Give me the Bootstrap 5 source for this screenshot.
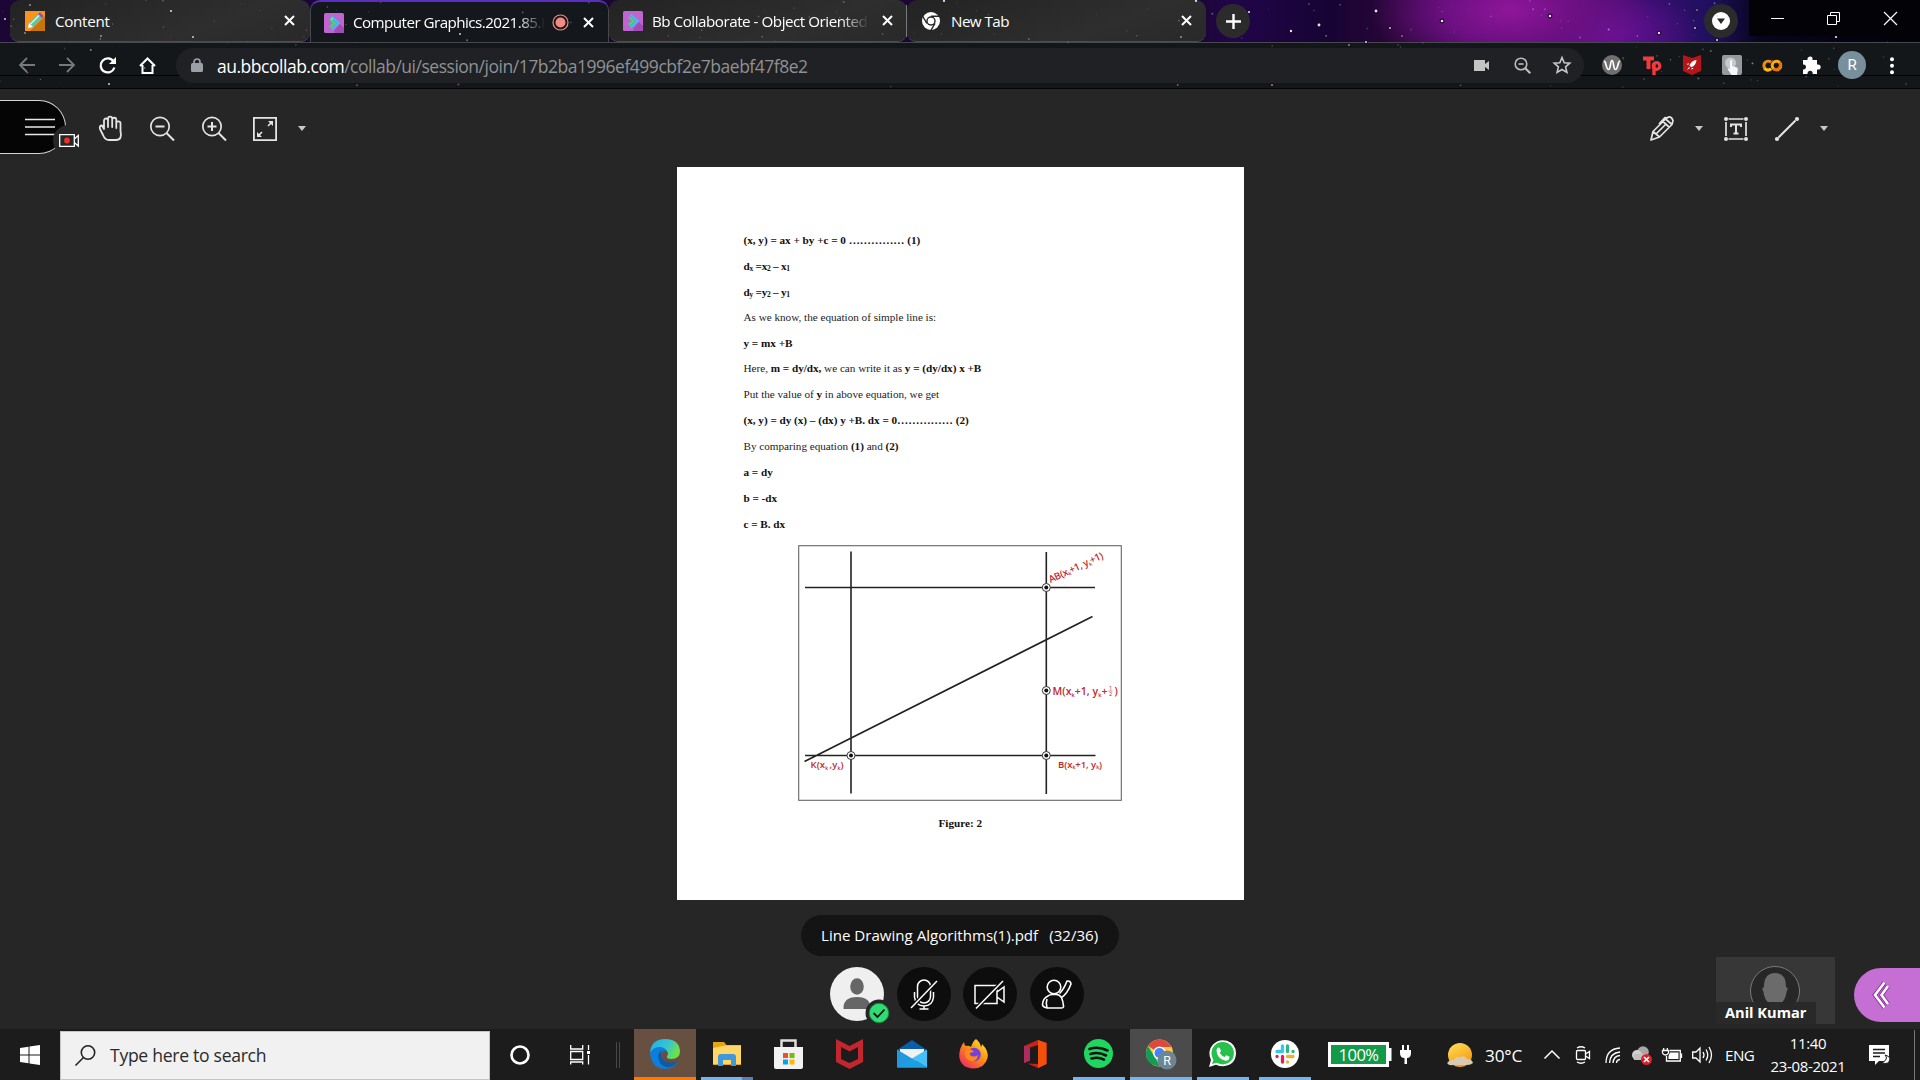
<!DOCTYPE html>
<html lang="en">
<head>
<meta charset="utf-8">
<meta name="viewport" content="width=device-width, initial-scale=1">
<title>Computer Graphics</title>
<link rel="stylesheet" href="https://cdn.jsdelivr.net/npm/bootstrap@5.3.0/dist/css/bootstrap.min.css">
<script src="https://cdn.jsdelivr.net/npm/bootstrap@5.3.0/dist/js/bootstrap.bundle.min.js"></script>
<style>
body{width:1920px;height:1080px;background:#262626;color:#fff;font-family:"Open Sans","Noto Sans",sans-serif;line-height:1.2}
svg{display:block;flex:none;overflow:visible}
.c18{width:18px}.c20{width:20px}.c30{width:30px}.c40{width:40px}.c52{width:51.3px}.c56{width:56px}.c62{width:62px}
.ln{fill:none;stroke:currentColor}
.sky{left:0;top:0;z-index:0}
/* tab strip */
.strip{height:42px;background:radial-gradient(ellipse 140px 70px at 1510px 10px,#8f1699 0,#6e1084 45%,transparent 100%),radial-gradient(ellipse 90px 50px at 1610px 34px,#6a1298 0,transparent 100%),linear-gradient(90deg,#1c0636 0,#1c0636 1200px,#21054a 1230px,#170434 1330px,#2a0638 1400px,#400c62 1560px,#350d6c 1650px,#201060 1710px,#07041c 1760px,#020208 1920px)}
.tabx{height:42px;background:linear-gradient(160deg,#232323,#2e2e2e 65%,#292929);border-radius:10px 10px 9px 9px;font-size:15.2px;letter-spacing:-.55px;border-bottom:1px solid #4c4d4f}
.tabx.on{background:#14171c;border:1px solid #45474b;border-top:2px solid #5a2fc0;border-bottom:0;border-radius:10px 10px 0 0;height:43px}
.ttl{white-space:nowrap;line-height:1.5}
.tabx .ttl{padding-top:1px}
.tabx.on .ttl{padding-top:0}
.fade-r{overflow:hidden;-webkit-mask-image:linear-gradient(90deg,#000 calc(100% - 28px),transparent)}
.disc{width:34px;height:34px;background:#2b2b2b}
.winctl{height:36px;background:#030307;width:171px;margin-bottom:6px}
/* address bar */
.addr{height:47px;background:linear-gradient(#14171a,#14171a);border-top:1px solid #47494c;border-bottom:1px solid #050505;padding-left:7px}
.seam{left:0;right:0;top:32px;height:1px;background:#020202}
.omni{height:35px;width:1408px;background:#202124;margin-left:9px;padding-right:2px;font-size:17.5px;letter-spacing:-.48px}
.omni .rest{color:#8f9194}
/* collaborate stage */
.stage{height:941px}
.tools{height:78px;color:#e4e4e4;padding-top:2px}
.burger{width:66px;height:54px;background:#050505;border:1px solid #d5d5d5;border-left:0;border-radius:0 27px 27px 0;padding-left:25px;margin-top:-3px;margin-right:19.5px}
.recdot{left:53px;top:24px;width:31px;height:31px;background:#262626}
.sheet{width:567px;height:733px;background:#fff;color:#1c1c1c;font-family:"Liberation Serif",serif;font-size:11.2px;letter-spacing:-.02px;padding:61px 66px 0 66.5px}
.sheet p{margin:0;height:25.9px;line-height:25.9px;white-space:nowrap}
.sheet p.up{margin-top:-1px}
.sheet b{color:#111}
.sheet sub{font-size:7.5px;bottom:-.15em;line-height:0}
.tight{letter-spacing:-.25px}
.cap{margin-top:16px;margin-left:-1px}
.fig{margin:7px 0 0 54px}
.fig text{font-family:"Open Sans",sans-serif;font-weight:600;fill:#c2272d;letter-spacing:0}
.docname{width:318px;height:41px;background:#141414;font-size:15.1px;margin-top:15px}
.rnd{width:54px;height:54px;background:#0d0d0d}
.me{background:#efefef}
.tick{left:35px;top:32px}
.tile{left:1716px;top:868px;width:119px;height:67px;background:#373737}
.nametag{left:0;bottom:0;width:100px;height:22px;background:rgba(40,40,40,.94);font-weight:700;font-size:14.6px;padding-left:9px}
.opener{right:0;top:879px;width:66px;height:54px;background:#c56fd5;border-radius:27px 0 0 27px;padding-left:18px}
/* taskbar */
.tbar{height:51px;background:#1c1c1c;font-size:15.6px}
.find{width:430px;height:49px;background:#f1f1f1;border:1px solid #c4c4c4;color:#2b2b2b;font-size:17.6px;letter-spacing:-.15px;margin-top:1px}
.app{width:62px;height:51px;border-bottom:3px solid transparent;padding:1px 1px 0 0}
.app.w{width:52px;margin:0 5px;border-color:#76b4ee}
.app.edge{background:#67503f;border-color:#ff7800}
.app.cur{background:#4b4b4b;border-color:#76b4ee}
.vr2{width:4px;height:26px;border-left:1px solid #484848;border-right:1px solid #484848}
.batt{width:61px;height:25px;background:#129a48;border:3px solid #fff;font-size:16.6px;letter-spacing:-.5px}
.clk{font-size:15px;line-height:23px;letter-spacing:-.35px;width:90px}
</style>
</head>
<body class="d-flex flex-column overflow-hidden">

<header class="strip d-flex position-relative">
  <div class="tabx d-flex align-items-center position-relative" style="width:300px;margin-left:10px;padding-left:15px">
    <svg width="20" height="20"><rect width="20" height="20" fill="#f7931e"/><path d="M5 20L20 5v15z" fill="#c97409"/><path d="M4 12L13 3l4 4-9 9-5 1z" fill="#54c7b5"/><path d="M5.500 13L14.500 4" stroke="#e5f7b8" stroke-width="1.500"/><path d="M13 3l2-1.500L18.500 5 17 7z" fill="#8a4bc4"/><path d="M3 17l1-5 4 4z" fill="#fff"/></svg>
    <span class="ttl" style="margin-left:10px;letter-spacing:-.3px">Content</span>
    <svg class="ms-auto me-3" width="9" height="9" stroke="#fff" stroke-width="2"><path d="M0 0l9 9M9 0L0 9"/></svg>
  </div>
  <div class="tabx on d-flex align-items-center position-relative" style="width:299px;padding-left:13px">
    <svg width="20" height="20"><rect width="20" height="20" rx="1.500" fill="#c065d0"/><path d="M10 18l6-7 4 4v5h-9z" fill="#a24cb5"/><path d="M7.500 3.500l7 6.500-7 6.500" fill="none" stroke="#2cc9ea" stroke-width="2.200"/><path d="M6 6l4.500 4L6 14" fill="none" stroke="#3be06a" stroke-width="2.200"/></svg>
    <span class="ttl fade-r" style="width:192px;margin-left:9px">Computer Graphics.2021.85.B</span>
    <svg style="margin-left:7px" width="17" height="17"><circle cx="8.500" cy="8.500" r="7.500" fill="none" stroke="#f28b82" stroke-width="1.200"/><circle cx="8.500" cy="8.500" r="5" fill="#f28b82"/></svg>
    <svg style="margin-left:15px" width="9" height="9" stroke="#fff" stroke-width="2"><path d="M0 0l9 9M9 0L0 9"/></svg>
  </div>
  <div class="tabx d-flex align-items-center position-relative" style="width:298px;padding-left:14px">
    <svg width="20" height="20"><rect width="20" height="20" rx="1.500" fill="#c065d0"/><path d="M10 18l6-7 4 4v5h-9z" fill="#a24cb5"/><path d="M7.500 3.500l7 6.500-7 6.500" fill="none" stroke="#2cc9ea" stroke-width="2.200"/><path d="M6 6l4.500 4L6 14" fill="none" stroke="#3be06a" stroke-width="2.200"/></svg>
    <span class="ttl fade-r" style="width:218px;margin-left:9px;letter-spacing:-.48px">Bb Collaborate - Object Oriented</span>
    <svg style="margin-left:14px" width="9" height="9" stroke="#fff" stroke-width="2"><path d="M0 0l9 9M9 0L0 9"/></svg>
    <svg style="margin-left:14px" width="1" height="32"><rect width="1" height="32" fill="#77797c"/></svg>
  </div>
  <div class="tabx d-flex align-items-center position-relative" style="width:299px;padding-left:14px">
    <svg width="20" height="20" viewBox="0 0 20 20"><circle cx="10" cy="10" r="9" fill="#fff"/><circle cx="10" cy="10" r="4.700" fill="#262626"/><circle cx="10" cy="10" r="3.300" fill="#fff"/><path d="M10 5.300h9M5.900 12.300L1.500 5M14 12.300L9.500 20" stroke="#262626" stroke-width="1.400"/></svg>
    <span class="ttl" style="margin-left:10px">New Tab</span>
    <svg class="ms-auto" style="margin-right:15px" width="9" height="9" stroke="#fff" stroke-width="2"><path d="M0 0l9 9M9 0L0 9"/></svg>
  </div>
  <span class="disc rounded-circle d-flex align-items-center justify-content-center align-self-center" style="margin-left:10px"><svg width="15" height="15" stroke="#fff" stroke-width="2.400"><path d="M0 7.500h15M7.500 0v15"/></svg></span>
  <span class="disc rounded-circle d-flex align-items-center justify-content-center align-self-center ms-auto"><svg width="18" height="18"><circle cx="9" cy="9" r="9" fill="#fff"/><path d="M5 6.500h8L9 12z" fill="#262626"/></svg></span>
  <div class="winctl d-flex align-items-center position-relative" style="margin-left:11px;z-index:1">
    <span class="c56 d-flex justify-content-center"><svg width="13" height="13" stroke="#fff"><path d="M0 6.500h13"/></svg></span>
    <span class="c56 d-flex justify-content-center"><svg width="13" height="13" class="ln"><path d="M.5 3.500h9v9h-9zM3.500 3V.5h9v9H10"/></svg></span>
    <span class="flex-fill d-flex justify-content-center"><svg width="13" height="13" stroke="#fff" stroke-width="1.200"><path d="M0 0l13 13M13 0L0 13"/></svg></span>
  </div>
</header>

<nav class="addr d-flex align-items-center position-relative">
  <div class="seam position-absolute"></div>
  <span class="c40 d-flex justify-content-center"><svg width="16" height="16" class="ln" style="color:#77797c" stroke-width="1.800"><path d="M16 8H1M8 1L1 8l7 7"/></svg></span>
  <span class="c40 d-flex justify-content-center"><svg width="16" height="16" class="ln" style="color:#77797c" stroke-width="1.800"><path d="M0 8h15M8 1l7 7-7 7"/></svg></span>
  <span class="c40 d-flex justify-content-center"><svg width="17" height="17" class="ln" stroke-width="2.200"><path d="M14.500 4.500a7 7 0 1 0 .9 6"/><path d="M17 0v7h-7z" fill="#fff" stroke="none"/></svg></span>
  <span class="c40 d-flex justify-content-center"><svg width="17" height="17" class="ln" stroke-width="2"><path d="M1 9l7.500-7.500L16 9M3.500 8v8h10V8"/></svg></span>
  <div class="omni rounded-pill d-flex align-items-center position-relative" style="z-index:1">
    <span class="d-flex justify-content-center" style="width:42px"><svg width="12" height="15"><rect y="5" width="12" height="9" rx="1.500" fill="#9aa0a6"/><path d="M3 6V4a3 3 0 0 1 6 0v2" fill="none" stroke="#9aa0a6" stroke-width="1.700"/></svg></span>
    <span class="ttl" style="margin-left:-1px;padding-top:1px">au.bbcollab.com<span class="rest">/collab/ui/session/join/17b2ba1996ef499cbf2e7baebf47f8e2</span></span>
    <span class="c40 d-flex justify-content-center ms-auto"><svg width="16" height="12" fill="#c4c4c4"><path d="M0 1h11v4l4-3v9l-4-3v4H0z"/></svg></span>
    <span class="c40 d-flex justify-content-center"><svg width="17" height="17" class="ln" style="color:#bdbdbd" stroke-width="1.600"><circle cx="7" cy="7" r="5.800"/><path d="M11.300 11.300l5 5" stroke-width="2.200"/><path d="M4.500 7h5"/></svg></span>
    <span class="c40 d-flex justify-content-center"><svg width="18" height="18" class="ln" style="color:#c8c8c8" stroke-width="1.600"><path d="M9 1.500l2.200 5.200 5.600.5-4.200 3.700 1.300 5.500L9 13.500l-4.900 2.900 1.300-5.500L1.200 7.200l5.600-.5z"/></svg></span>
  </div>
  <span class="c40 d-flex justify-content-center ms-2 position-relative"><svg width="20" height="20"><circle cx="10" cy="10" r="10" fill="#6f6f6f"/><path d="M2 6.500C4 5 4 14.500 6.500 14.500S8 5.500 10 5.500s1 9 3.500 9S16 5 18 6.500" class="ln" stroke-width="1.700"/></svg></span>
  <span class="c40 d-flex justify-content-center position-relative"><svg width="19" height="18" fill="none" stroke="#f03a3e" stroke-width="4"><path d="M0 2.500h11M5.500 2v11"/><path d="M11 19V7" stroke-width="3.400"/><circle cx="13.500" cy="10" r="3.300" stroke-width="3.200"/></svg></span>
  <span class="c40 d-flex justify-content-center position-relative"><svg width="18" height="20"><path d="M0 0l9 3 9-3v16l-9 4-9-4z" fill="#b61619"/><path d="M13.500 5c-4 .3-6 3-7 5.500l1.800 1.800c3-1.200 5-3.500 5.200-7.300zM5.800 9.500l-2 .3 1.500-2zM8.800 12.700l-.3 2 2-1.500zM4 15l2-3 1 1z" fill="#fff"/></svg></span>
  <span class="c40 d-flex justify-content-center position-relative"><svg width="20" height="20"><rect width="20" height="20" rx="2" fill="#969a9c"/><circle cx="8.500" cy="8" r="5.500" fill="#c7caca"/><path d="M8 5.500q1.500-1 2 0V11l5 1.500q1 .4.800 2L15 20H9.500L5.500 14q1-1.500 2.500 0z" fill="#f4f8ff"/></svg></span>
  <span class="c40 d-flex justify-content-center position-relative"><svg width="20" height="13" fill="none" stroke-width="3"><path d="M9 3.300a4.300 4.300 0 1 0 0 6.500" stroke="#ec8f0d"/><path d="M2.500 9.500a4.300 4.300 0 0 0 6.500.3" stroke="#f9bd0f"/><circle cx="14.500" cy="6.500" r="4.300" stroke="#f9ab10"/><path d="M11.500 9.700a4.300 4.300 0 0 0 6-6" stroke="#e8710a"/></svg></span>
  <span class="c40 d-flex justify-content-center position-relative"><svg width="18" height="18" fill="#fff"><path d="M0 4h4.500C3.500 0 10.500-1 9.500 4H14v4.500c5-1 5 6 0 5V18H9.700c.4-4.500-5.500-4-5.200 0H0v-4.500c4 .5 4-5.500 0-5z"/></svg></span>
  <span class="c40 d-flex justify-content-center position-relative"><svg width="28" height="28"><circle cx="14" cy="14" r="14" fill="#78909c"/><text x="14" y="19" text-anchor="middle" font-family="Roboto" font-size="15" fill="#fff">R</text></svg></span>
  <span class="c40 d-flex justify-content-center position-relative"><svg width="4" height="17" fill="#fff"><circle cx="2" cy="2.200" r="2"/><circle cx="2" cy="8.700" r="2"/><circle cx="2" cy="15.200" r="2"/></svg></span>
</nav>

<main class="stage position-relative d-flex flex-column align-items-center">
  <div class="tools d-flex align-items-center w-100">
    <div class="burger position-relative d-flex align-items-center">
      <svg width="30" height="18" stroke="#e8e8e8" stroke-width="1.600"><path d="M0 1.500h30M0 9h30M0 16.500h30"/></svg>
      <span class="recdot position-absolute rounded-circle d-flex align-items-center"><svg style="margin-left:6px;margin-top:0" width="20" height="13"><path d="M.7.700h14.600v11.600H.7zM15.300 5l4-3.500v10.500l-4-3.500" fill="none" stroke="#fff" stroke-width="1.300"/><circle cx="8" cy="6.500" r="2.900" fill="#f22f28"/></svg></span>
    </div>
    <span class="c52 d-flex justify-content-center"><svg width="24" height="25" class="ln" stroke-width="1.800" stroke-linejoin="round" stroke-linecap="round"><path d="M5 13V4.500a2 2 0 0 1 4 0V11M9 11V2.800a2 2 0 0 1 4.200 0V11M13.200 11V3.800a2 2 0 0 1 4.100 0V12M17.300 12V7.500a2 2 0 0 1 4.200 0V15Q23.500 24 17 24H10Q6 24 4 19L1 13Q0 9.500 3 9.500L5 13"/></svg></span>
    <span class="c52 d-flex justify-content-center"><svg width="24" height="25" class="ln" stroke-width="1.700"><circle cx="10" cy="10.500" r="9.200"/><path d="M16.500 17l7.500 7.500M5.500 10.500h9" stroke-width="2"/></svg></span>
    <span class="c52 d-flex justify-content-center"><svg width="24" height="25" class="ln" stroke-width="1.700"><circle cx="10" cy="10.500" r="9.200"/><path d="M16.500 17l7.500 7.500M5.500 10.500h9M10 6v9" stroke-width="2"/></svg></span>
    <span class="c52 d-flex justify-content-center"><svg width="24" height="24" class="ln" stroke-width="1.800"><path d="M.9.900h22.200v22.200H.9z"/><path d="M15 9l4.500-4.500M9 15l-4.500 4.500" stroke-width="1.600"/><path d="M15 4h5v5zM4 15v5h5z" fill="currentColor" stroke="none"/></svg></span>
    <svg width="8" height="5" fill="#c8c8c8" style="margin-left:7px"><path d="M0 0h8L4 5z"/></svg>
    <span class="ms-auto"><svg width="24" height="25" class="ln" stroke-width="1.700" stroke-linejoin="round"><path d="M1 24l2-8.500L15.500 3l6.500 5.500L9.500 21zM3 15.500L9.500 21M15.500 3l3-2q3-.5 4.500 3.500L22 8.500M13 5.500l6 5.500M9 8l6-6.500 3 .5M6.500 17.500L16.500 7.500"/></svg></span>
    <svg width="8" height="5" fill="#c8c8c8" style="margin-left:21px"><path d="M0 0h8L4 5z"/></svg>
    <svg width="24" height="24" style="margin-left:21px" fill="currentColor"><path d="M4.500 2h15M4.500 22h15M2 5v14M22 5v14" class="ln" stroke-width="1.700"/><circle cx="2" cy="2" r="2"/><circle cx="22" cy="2" r="2"/><circle cx="2" cy="22" r="2"/><circle cx="22" cy="22" r="2"/><path d="M7 10V7.500h10V10M12 7.500v9M9.500 16.500h5" class="ln" stroke-width="2"/></svg>
    <svg width="24" height="24" style="margin-left:27px" fill="currentColor"><path d="M3.500 20.500L20.500 3.500" class="ln" stroke-width="2"/><circle cx="2" cy="22" r="2.100"/><circle cx="22" cy="2" r="2.100"/></svg>
    <svg width="8" height="5" fill="#c8c8c8" style="margin-left:21px;margin-right:92px"><path d="M0 0h8L4 5z"/></svg>
  </div>

  <article class="sheet" style="margin-left:1px">
    <p><b>(x, y) = ax + by +c = 0 …………… (1)</b></p>
    <p class="tight"><b>d<sub>x</sub> =x<sub>2</sub> – x<sub>1</sub></b></p>
    <p class="tight"><b>d<sub>y</sub> =y<sub>2</sub> – y<sub>1</sub></b></p>
    <p class="up">As we know, the equation of simple line is:</p>
    <p><b>y = mx +B</b></p>
    <p>Here, <b>m = dy/dx,</b> we can write it as <b>y = (dy/dx) x +B</b></p>
    <p>Put the value of <b>y</b> in above equation, we get</p>
    <p><b>(x, y) = dy (x) – (dx) y +B. dx = 0…………… (2)</b></p>
    <p>By comparing equation <b>(1)</b> and <b>(2)</b></p>
    <p><b>a = dy</b></p>
    <p><b>b = -dx</b></p>
    <p><b>c = B. dx</b></p>
    <svg class="fig" width="324" height="256" viewBox="0 0 324 256">
      <rect x=".7" y=".7" width="322.600" height="254.600" fill="#fff" stroke="#666" stroke-width="1.100"/>
      <g stroke="#222" stroke-width="1.600"><path d="M53 6.500v242M248.300 7v242M7 42.500h290M7 210.500h290.500M6.500 216.500L294.500 71.500"/></g>
      <g fill="#fff" stroke="#333" stroke-width="1"><circle cx="53" cy="210.500" r="4"/><circle cx="248.300" cy="210.500" r="4"/><circle cx="248.300" cy="145.500" r="4"/><circle cx="248.300" cy="42.500" r="4"/></g>
      <g fill="#111"><circle cx="53" cy="210.500" r="2"/><circle cx="248.300" cy="210.500" r="2"/><circle cx="248.300" cy="145.500" r="2"/><circle cx="248.300" cy="42.500" r="2"/></g>
      <text x="12.500" y="223" font-size="9.500" textLength="33">K(x<tspan font-size="5" dy="1.500">k </tspan><tspan dy="-1.500">,y</tspan><tspan font-size="5" dy="1.500">k</tspan><tspan dy="-1.500">)</tspan></text>
      <text x="260" y="222.500" font-size="9.500" textLength="44">B(x<tspan font-size="5" dy="1.500">k</tspan><tspan dy="-1.500">+1, y</tspan><tspan font-size="5" dy="1.500">k</tspan><tspan dy="-1.500">)</tspan></text>
      <text x="254.500" y="150" font-size="10.500" textLength="55">M(x<tspan font-size="5.500" dy="1.500">k</tspan><tspan dy="-1.500">+1, y</tspan><tspan font-size="5.500" dy="1.500">k</tspan><tspan dy="-1.500">+</tspan></text>
      <text x="311" y="145" font-size="5.500" style="font-weight:400">1</text><path d="M310.500 146h4" stroke="#c2272d" stroke-width=".6"/><text x="311" y="151" font-size="5.500" style="font-weight:400">2</text><text x="316.500" y="150" font-size="10.500">)</text>
      <text transform="translate(252.500 38) rotate(-25)" font-size="9.800" textLength="59">AB(x<tspan font-size="5" dy="1.500">k</tspan><tspan dy="-1.500">+1, y</tspan><tspan font-size="5" dy="1.500">k</tspan><tspan dy="-1.500">+1)</tspan></text>
    </svg>
    <div class="cap text-center"><b>Figure: 2</b></div>
  </article>

  <div class="docname rounded-pill d-flex align-items-center" style="padding-left:20px"><span class="ttl">Line Drawing Algorithms(1).pdf</span><span class="ttl" style="margin-left:11px">(32/36)</span></div>

  <div class="d-flex" style="gap:12.500px;margin-top:11px;margin-right:6px">
    <span class="rnd me rounded-circle position-relative">
      <svg width="54" height="54" fill="#666"><ellipse cx="27" cy="19.500" rx="6.800" ry="8.300"/><path d="M13.500 42q-.5-12 13.500-12t13.500 12z"/></svg>
      <svg class="tick position-absolute" width="28" height="28"><circle cx="14" cy="14" r="13.500" fill="#262626"/><circle cx="14" cy="14" r="9.700" fill="#2fdd74" stroke="#0f8f41"/><path d="M8.500 14l4 4 7-7.500" fill="none" stroke="#111" stroke-width="1.800"/></svg>
    </span>
    <span class="rnd rounded-circle"><svg width="54" height="54" class="ln" stroke-width="1.500"><rect x="20.500" y="13" width="13" height="23" rx="6.500"/><path d="M17.500 25v5q1 9 9.500 9t9.500-9v-5M27 39v2.500M22.500 42h9"/><path d="M14 41L40 14" stroke="#0d0d0d" stroke-width="4"/><path d="M14 41L40 14"/></svg></span>
    <span class="rnd rounded-circle"><svg width="54" height="54" class="ln" stroke-width="1.500"><path d="M12 18.500h22v18H12zM34 25l7-5v15l-7-5"/><path d="M13 41.500L40 14" stroke="#0d0d0d" stroke-width="4"/><path d="M13 41.500L40 14"/></svg></span>
    <span class="rnd rounded-circle"><svg width="54" height="54" class="ln" stroke-width="1.600" stroke-linejoin="round"><circle cx="24" cy="20" r="6.800"/><path d="M18 29q-5 2-5.500 8.500Q12.500 40 17 41h14q3 0 2.500-2-.5-5-2-8.500-2-3-5-3h-4q-3 0-4.500 1.500zM17 41q-1.500-5 0-9M31.500 30.500q6-4 9.500-13.500-.5-3.500-4-3-3 8-7.500 12.500"/></svg></span>
  </div>

  <div class="tile position-absolute overflow-hidden">
    <svg width="119" height="67"><circle cx="59" cy="34" r="24.500" fill="#272727" stroke="#7b7b7b"/><path d="M48 30q0-14 11-14t11 14q3 1 .5 5-.5 7-6 12-5.500 3-11 0-5.500-5-6-12-2.500-4 .5-5z" fill="#6b6b6b"/><path d="M54 45h10v9H54z" fill="#6b6b6b"/></svg>
    <span class="nametag position-absolute d-flex align-items-center">Anil Kumar</span>
  </div>
  <span class="opener position-absolute d-flex align-items-center"><svg width="18" height="28" fill="none"><path d="M12.500 1.500L3 14l9.500 12.500M16 5L9.500 14l6.500 9" stroke="#8f34a3" stroke-width="4.500"/><path d="M12.500 1.500L3 14l9.500 12.500M16 5L9.500 14l6.500 9" stroke="#fff" stroke-width="2.500"/></svg></span>
</main>

<footer class="tbar d-flex align-items-center">
  <span class="d-flex justify-content-center" style="width:60px"><svg width="20" height="20" fill="#fff"><path d="M0 3l8.500-1.200v7.700H0zM9.500 1.600L20 0v9.500H9.500zM0 10.500h8.500v7.700L0 17zM9.500 10.500H20V20L9.500 18.400z"/></svg></span>
  <div class="find d-flex align-items-center"><svg width="21" height="21" fill="none" stroke="#222" stroke-width="1.600" style="margin-left:14px"><circle cx="13" cy="7.500" r="6.700"/><path d="M8.500 12.500L.5 20.500"/></svg><span class="ttl" style="margin-left:14px;letter-spacing:-.3px">Type here to search</span></div>
  <span class="c62 d-flex justify-content-center" style="padding-right:2px"><svg width="20" height="20"><circle cx="10" cy="10" r="8.500" fill="none" stroke="#fff" stroke-width="2.600"/></svg></span>
  <span class="d-flex justify-content-center" style="width:58px;padding-right:2px"><svg width="20" height="20" class="ln" stroke-width="1.300"><path d="M.7 0v4h12V0M.7 6.500h12v8H.7zM.7 19.500V17h12v2.500M18.500 0v5M18.500 10v9.500"/><path d="M17 6h3v3h-3z" fill="#fff" stroke="none"/></svg></span>
  <span class="vr2" style="margin:0 14px 0 6px"></span>

  <span class="app edge d-flex align-items-center justify-content-center"><svg width="30" height="30" viewBox="0 0 30 30"><defs><linearGradient id="eg" x2="1" y2=".4"><stop stop-color="#1faee8"/><stop offset=".6" stop-color="#35c4d2"/><stop offset="1" stop-color="#6be04c"/></linearGradient></defs><path d="M0 14Q1 0 15 0q14 0 15 12 0 8-9 8-5 0-4-3 2-2 0-5Q8 5 0 14z" fill="url(#eg)"/><path d="M0 14q3-6 9-6 6 0 8 4-5-1-6 4-1 6 5 9 6 2 12-2-5 7-13 7Q1 29 0 14z" fill="#0d7fdb"/><path d="M13 10q-7 4-4 12 3 7 11 6 5-1 8-6-6 3-11 1-5-2-6-7-.5-4 2-6z" fill="#0f5aa8"/></svg></span>
  <span class="app d-flex align-items-center justify-content-center position-relative"><svg width="28" height="24" class="mt-0"><path d="M0 0h11l2.500 3H28v20H0z" fill="#e5a50f"/><path d="M0 6l13-2.500h15V22H0z" fill="#ffd767"/><path d="M5 24v-9q0-3 3-3h12q3 0 3 3v9h-5v-6h-8v6z" fill="#3f97dc"/></svg><svg class="position-absolute" style="left:5px;bottom:-3px" width="52" height="3"><rect width="41" height="3" fill="#76b4ee"/><rect x="41" width="11" height="3" fill="#5783ae"/></svg></span>
  <span class="app d-flex align-items-center justify-content-center"><svg width="29" height="30"><path d="M7.500 9V1.500h14V9" fill="none" stroke="#dedede" stroke-width="2.500"/><path d="M0 8h29v20q0 2-2 2H2q-2 0-2-2z" fill="#f2f2f2"/><path d="M9 14h5v5H9z" fill="#f25022"/><path d="M15.500 14h5v5h-5z" fill="#7fba00"/><path d="M9 20.500h5v5H9z" fill="#00a4ef"/><path d="M15.500 20.500h5v5h-5z" fill="#ffb900"/></svg></span>
  <span class="app d-flex align-items-center justify-content-center"><svg width="27" height="30" style="margin-right:2px"><path d="M0 0l13.500 7L27 0v23l-13.500 7L0 23zM5 8v12l8.500 4 8.500-4V8l-8.500 4.500z" fill="#c1272d" fill-rule="evenodd"/></svg></span>
  <span class="app d-flex align-items-center justify-content-center"><svg width="30" height="28" style="margin-right:2px"><path d="M0 10L15 0l15 10v4H0z" fill="#0b5cab"/><path d="M3 9h24v12H3z" fill="#f1f1f1"/><path d="M0 9.500L30 27.500H0z" fill="#2299df"/><path d="M30 9.500v18L15 18.500z" fill="#41c1f5"/><path d="M15 18.500l15 9H0z" fill="#1e9ee3"/></svg></span>
  <span class="app d-flex align-items-center justify-content-center"><svg width="29" height="30" style="margin-right:2px"><defs><linearGradient id="ff" x1="1" x2=".2" y2="1"><stop stop-color="#fff44f"/><stop offset=".45" stop-color="#ff980e"/><stop offset="1" stop-color="#f02a61"/></linearGradient></defs><path d="M17 0q4 3 5 8 1-1 1-3 7 7 5.500 14Q26 29 14.500 29.500 2 29 .3 18 0 9 5 3q0 3 2 4 3-1 5 1Q14 2 17 0z" fill="url(#ff)"/><circle cx="15" cy="15.500" r="6.800" fill="#7542d8"/><path d="M8 10q5 0 7 3-5 0-4 3 4 3 8 0-1 7-7 6-6-2-6-8z" fill="#ff8a16"/></svg></span>
  <span class="app d-flex align-items-center justify-content-center"><svg width="23" height="28" style="margin-right:2px"><path d="M0 6L14 0l8.500 3v21L14 28 3.500 23.500 14 24V5L6 7.500v13L0 23z" fill="#c9211e"/><path d="M14 0l8.500 3v21L14 28z" fill="#f4500c"/><path d="M0 6l6 1.500v13L0 23z" fill="#ae2d61"/></svg></span>
  <span class="app w d-flex align-items-center justify-content-center"><svg width="29" height="29"><circle cx="14.500" cy="14.500" r="14.500" fill="#1ed760"/><path d="M5.500 10q9-3 18 1.500M6.500 15q8-2.500 15.500 1.500M7.500 19.500q7-2 12.500 1.200" fill="none" stroke="#111" stroke-width="2.600" stroke-linecap="round"/></svg></span>
  <span class="app cur d-flex align-items-center justify-content-center"><svg width="29" height="29"><circle cx="13.500" cy="14" r="13.500" fill="#ffcd40"/><path d="M13.500 14L2 7Q6 .5 13.500.5T25.500 8H13.500z" fill="#db4a3d"/><path d="M2 7l8 13 4 7.500Q0 26 0 14q0-4 2-7z" fill="#0f9d58"/><circle cx="13.500" cy="14" r="6.500" fill="#fff"/><circle cx="13.500" cy="14" r="5" fill="#4285f4"/><circle cx="21" cy="21" r="9.500" fill="#6e8694"/><text x="21" y="25.500" text-anchor="middle" font-family="Roboto" font-size="12.500" fill="#fff">R</text></svg></span>
  <span class="app w d-flex align-items-center justify-content-center"><svg width="27" height="27"><path d="M0 27l2-7Q-2 11 4 4.500 10-1.500 18 .8q9 3 9 12.500-.5 12-13 13-3.500 0-7-1.500z" fill="#fff"/><circle cx="13.700" cy="13.200" r="11.200" fill="#25c14b"/><path d="M3 24l2-6 4.500 4.300z" fill="#25c14b"/><path d="M8 8.500q1.500-2 3 0l1 2.500-1.300 2q2 3 4.800 4l1.700-1.800 3.300 1.600q0 4-4 4Q8 19 7.500 10.500z" fill="#fff"/></svg></span>
  <span class="app w d-flex align-items-center justify-content-center"><svg width="28" height="28"><circle cx="14" cy="14" r="14" fill="#fff"/><g fill="none" stroke-width="3.300" stroke-linecap="round"><path d="M11.500 6v4.500M6 11.500h5.500" stroke="#36c5f0"/><path d="M16.500 6v5.500M22 11.500h.1" stroke="#2eb67d"/><path d="M16.500 16.500H22M16.500 22v.1" stroke="#ecb22e"/><path d="M11.500 16.500V22M6 16.500h.1" stroke="#e01e5a"/></g></svg></span>

  <span class="batt d-flex align-items-center justify-content-center" style="margin-left:12px">100%</span><svg width="3" height="13"><rect width="2.500" height="13" fill="#fff"/></svg>
  <svg width="11" height="19" fill="#fff" style="margin-left:8px"><path d="M2 0h2v5h3V0h2v5h2v3q0 5-4 5v6H4.500v-6Q0 13 0 8V5h2z"/></svg>
  <svg width="28" height="24" style="margin-left:35px"><defs><linearGradient id="sn" x2=".5" y2="1"><stop stop-color="#ffe159"/><stop offset="1" stop-color="#f79a12"/></linearGradient></defs><circle cx="14" cy="12" r="12" fill="url(#sn)"/><path d="M1 20q3-4 7-3 2-4 7-3 4-2 6 2 5 0 6 4-2 2-6 2H7q-4 1-6-2z" fill="#d9c9b0"/></svg>
  <span class="ttl" style="width:56px;margin-left:11px;font-size:17.2px;letter-spacing:-.2px;padding-top:2px">30°C</span>
  <svg width="16" height="9" class="ln" stroke-width="1.500" style="margin-left:3px"><path d="M.5 8.500L8 1l7.500 7.500" stroke="#fff"/></svg>
  <span class="c30 d-flex justify-content-center" style="margin-left:8px"><svg width="16" height="18" class="ln" stroke-width="1.300"><rect x="1.500" y="4.500" width="9" height="9" rx="1"/><path d="M10.500 8l4-2.500v7l-4-2.500M2 2Q6-.5 10 2M2 16q4 2.500 8 0"/></svg></span>
  <span class="c30 d-flex justify-content-center"><svg width="16" height="16" class="ln" stroke-width="1.300"><path d="M1 16Q1 2 15 1M4.500 16Q5 6 15 5M8 16q.5-7 7-7.500M11.500 16q0-3 3.500-3.500" /></svg></span>
  <span class="c30 d-flex justify-content-center" style="padding-right:2px"><svg width="20" height="19" style="margin-top:2px"><circle cx="11" cy="6" r="5.800" fill="#a7a7a7"/><circle cx="5" cy="9" r="5" fill="#d0d0d0"/><path d="M2 8h13v6H2z" fill="#c0c0c0"/><circle cx="14.500" cy="13.500" r="5.500" fill="#d8222a"/><path d="M12 11l5 5M17 11l-5 5" stroke="#fff" stroke-width="1.600"/></svg></span>
  <span class="c30 d-flex justify-content-center" style="padding-right:2px"><svg width="20" height="14" class="ln" stroke-width="1.300"><path d="M7.500 2.500h10.800v10.500H4.500V8"/><path d="M8 4.500h8.500v6.500H6.500V8z" fill="#fff" stroke="none"/><path d="M19.500 5.500v4.500M1.700 0v2M5.300 0v2M.5 2.500h6V5q-1 2-3 2T.5 5z"/></svg></span>
  <span class="c30 d-flex justify-content-center" style="padding-right:2px"><svg width="21" height="18" class="ln" stroke-width="1.300"><path d="M.7 6v6H4l4 4V2L4 6zM11 6q2 3 0 6M14 3.500q3.500 5.500 0 11M17 1q5 8 0 16"/></svg></span>
  <span style="width:44px;margin-left:7px;font-size:15.2px;letter-spacing:-.5px;padding-top:1px">ENG</span>
  <span class="clk text-center" style="margin-left:-6px">11:40<br>23-08-2021</span>
  <svg width="21" height="20" style="margin-left:16px"><path d="M0 0h20v16H10l-4 4v-4H0z" fill="#fff"/><path d="M4 4.500h12M4 8h12M4 11.500h7" stroke="#1c1c1c" stroke-width="1.300"/><path d="M16 10q4 4-3 8 7 2 8-4 0-3-5-4z" fill="#fff" stroke="#1c1c1c"/></svg>
  <svg width="1" height="50" class="ms-auto" style="margin-right:5px"><rect width="1" height="50" fill="#777"/></svg>
</footer>

<svg class="sky position-absolute pe-none" width="1920" height="88" id="sky" aria-hidden="true"></svg>
<script>
// Theme starfield: the bright stars by hand, then a fixed scatter of faint ones.
const bright=[[1291,31,2.2],[1319,25,2.6],[1376,11,2.6],[1390,28,1.6],[1442,21,2.4],[1550,16,2.4],[1659,33,2.2],[1695,28,1.6],[1697,10,1.4],[1836,37,2],[1717,40,1.8],[1349,45,1.5],[944,1,2],[1196,1,2],[1181,37,1.5],[171,11,1.8],[193,37,1.6],[101,36,1.5],[109,84,1.6],[25,33,1.4],[460,34,1.6],[5,19,1.7],[30,5,1.5],[1272,85,1.5],[1402,36,1.4],[1366,42,1.8],[1249,12,2]];
const tint=['#ffffff','#8fa6ff','#e58bd0','#c9b98f','#8f9297'];
let out=bright.map(s=>`<circle cx="${s[0]}" cy="${s[1]}" r="${s[2]}" fill="${s[0]>1250?'#1a0524':'none'}"/><circle cx="${s[0]}" cy="${s[1]}" r="${s[2]*.55}" fill="#e9ddfb"/>`).join('');
let n=7;const rnd=()=>(n=(n*16807)%2147483647)/2147483647;
for(let i=0;i<260;i++){const x=rnd()*1920,y=rnd()*88;if(x>176&&x<1584&&y>47&&y<84)continue;
out+=`<circle cx="${x.toFixed(1)}" cy="${y.toFixed(1)}" r="${(.4+rnd()*.6).toFixed(2)}" fill="${tint[i%5]}" opacity="${(.2+rnd()*.4).toFixed(2)}"/>`}
document.getElementById('sky').innerHTML=out;
</script>
</body>
</html>
